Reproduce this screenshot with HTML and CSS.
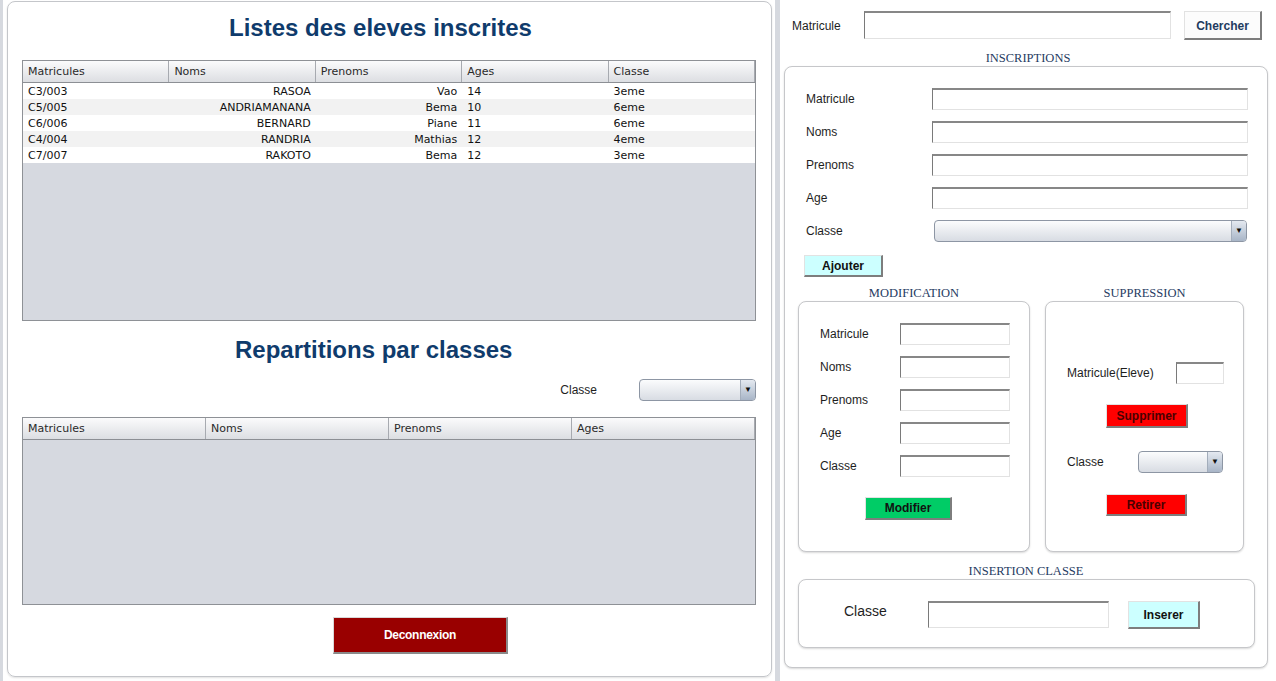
FILE: index.html
```html
<!DOCTYPE html>
<html lang="fr">
<head>
<meta charset="utf-8">
<title>Gestion des eleves</title>
<link rel="stylesheet" href="styles.css">
</head>
<body>
<div class="left-wrap">
  <div class="left-box">
    <h1 class="title title1">Listes des eleves inscrites</h1>
    <div class="table t1">
      <div class="thead cols5">
        <div class="th">Matricules</div><div class="th">Noms</div><div class="th">Prenoms</div><div class="th">Ages</div><div class="th">Classe</div>
      </div>
      <div class="tr cols5"><div class="td">C3/003</div><div class="td r">RASOA</div><div class="td r">Vao</div><div class="td">14</div><div class="td">3eme</div></div>
      <div class="tr cols5 alt"><div class="td">C5/005</div><div class="td r">ANDRIAMANANA</div><div class="td r">Bema</div><div class="td">10</div><div class="td">6eme</div></div>
      <div class="tr cols5"><div class="td">C6/006</div><div class="td r">BERNARD</div><div class="td r">Piane</div><div class="td">11</div><div class="td">6eme</div></div>
      <div class="tr cols5 alt"><div class="td">C4/004</div><div class="td r">RANDRIA</div><div class="td r">Mathias</div><div class="td">12</div><div class="td">4eme</div></div>
      <div class="tr cols5"><div class="td">C7/007</div><div class="td r">RAKOTO</div><div class="td r">Bema</div><div class="td">12</div><div class="td">3eme</div></div>
    </div>
    <h1 class="title title2">Repartitions par classes</h1>
    <div class="filter-row">
      <span class="lbl filter-lbl">Classe</span>
      <div class="combo combo-filter"><span class="combo-arrow">&#9660;</span></div>
    </div>
    <div class="table t2">
      <div class="thead cols4">
        <div class="th">Matricules</div><div class="th">Noms</div><div class="th">Prenoms</div><div class="th">Ages</div>
      </div>
    </div>
    <button class="btn btn-logout">Deconnexion</button>
  </div>
</div>
<div class="gap"></div>
<div class="right">
  <div class="search-row">
    <span class="lbl search-lbl">Matricule</span>
    <div class="input search-input"></div>
    <button class="btn btn-light btn-search">Chercher</button>
  </div>
  <div class="sec-title">INSCRIPTIONS</div>
  <div class="panel main-panel">
    <div class="form-row"><span class="lbl w126">Matricule</span><div class="input in-wide"></div></div>
    <div class="form-row"><span class="lbl w126">Noms</span><div class="input in-wide"></div></div>
    <div class="form-row"><span class="lbl w126">Prenoms</span><div class="input in-wide"></div></div>
    <div class="form-row"><span class="lbl w126">Age</span><div class="input in-wide"></div></div>
    <div class="form-row"><span class="lbl w126">Classe</span><div class="combo combo-wide"><span class="combo-arrow">&#9660;</span></div></div>
    <button class="btn btn-cyan btn-add">Ajouter</button>
    <div class="sub-cols">
      <div class="col col-mod">
        <div class="sub-title">MODIFICATION</div>
        <div class="panel mod-panel">
          <div class="form-row"><span class="lbl w80">Matricule</span><div class="input in-small"></div></div>
          <div class="form-row"><span class="lbl w80">Noms</span><div class="input in-small"></div></div>
          <div class="form-row"><span class="lbl w80">Prenoms</span><div class="input in-small"></div></div>
          <div class="form-row"><span class="lbl w80">Age</span><div class="input in-small"></div></div>
          <div class="form-row"><span class="lbl w80">Classe</span><div class="input in-small"></div></div>
          <button class="btn btn-green btn-mod">Modifier</button>
        </div>
      </div>
      <div class="col col-sup">
        <div class="sub-title">SUPPRESSION</div>
        <div class="panel sup-panel">
          <div class="form-row"><span class="lbl w109">Matricule(Eleve)</span><div class="input in-tiny"></div></div>
          <button class="btn btn-red btn-sup">Supprimer</button>
          <div class="form-row sup-classe"><span class="lbl w71">Classe</span><div class="combo combo-small"><span class="combo-arrow">&#9660;</span></div></div>
          <button class="btn btn-red btn-ret">Retirer</button>
        </div>
      </div>
    </div>
    <div class="sub-title ins-title">INSERTION CLASSE</div>
    <div class="panel ins-panel">
      <span class="lbl ins-lbl">Classe</span>
      <div class="input in-ins"></div>
      <button class="btn btn-cyan btn-ins">Inserer</button>
    </div>
  </div>
</div>
</body>
</html>
```
FILE: styles.css
```css
* { box-sizing: border-box; }
html, body { margin: 0; padding: 0; }
body {
  width: 1276px;
  height: 681px;
  overflow: hidden;
  background: #d6d9df;
  display: flex;
  font-family: "Liberation Sans", Arial, sans-serif;
}
.left-wrap {
  margin-left: 3px;
  width: 772px;
  height: 681px;
  background: #fff;
  padding: 1px 3px 4px 4px;
}
.left-box {
  width: 765px;
  height: 676px;
  border: 1px solid #c4c6ca;
  border-radius: 8px;
  box-shadow: 0 1px 2px rgba(0,0,0,0.12);
  padding: 0 14px;
  display: flex;
  flex-direction: column;
}
.title {
  margin: 0 0 6px 0;
  font-size: 24px;
  font-weight: bold;
  color: #0f3b6c;
  text-align: left;
  line-height: 53px;
  white-space: nowrap;
}
.title1 { padding-left: 207px; line-height: 52px; }
.title2 { margin: 0; line-height: 58px; padding-left: 213px; }
.table {
  width: 734px;
  border: 1px solid #8e9196;
  background: #d6d9e0;
  font-family: "DejaVu Sans", sans-serif;
  font-size: 11px;
}
.t1 { height: 261px; }
.t2 { height: 188px; margin-top: 16px; }
.thead {
  height: 22px;
  background: linear-gradient(#fbfbfc, #dcdee2);
  border-bottom: 1px solid #8c8f94;
}
.cols5 { display: grid; grid-template-columns: repeat(5, 1fr); }
.cols4 { display: grid; grid-template-columns: repeat(4, 1fr); }
.th {
  color: #2a2a2a;
  line-height: 21px;
  padding-left: 5px;
  border-right: 1px solid #a7aab0;
}
.tr { height: 16px; background: #fff; }
.tr.alt { background: #f2f2f2; }
.td {
  height: 16px;
  line-height: 16px;
  padding: 1px 5px 0 5px;
  color: #111;
  white-space: nowrap;
}
.td.r { text-align: right; }
.filter-row {
  width: 734px;
  height: 22px;
  display: flex;
  justify-content: flex-end;
  align-items: center;
}
.filter-lbl { margin-right: 42px; }
.lbl {
  font-size: 12px;
  color: #1e1e1e;
  white-space: nowrap;
}
.combo {
  height: 22px;
  border: 1px solid #8d96a4;
  border-radius: 4px;
  background: linear-gradient(#fbfcfd, #d8dce3);
  display: flex;
  justify-content: flex-end;
  overflow: hidden;
}
.combo-arrow {
  width: 15px;
  height: 100%;
  border-left: 1px solid #a3adbb;
  background: linear-gradient(#e4e9f0, #a8b5c7);
  font-size: 8px;
  line-height: 20px;
  text-align: center;
  color: #111;
}
.combo-filter { width: 117px; }
.btn {
  font-family: "Liberation Sans", Arial, sans-serif;
  font-weight: bold;
  font-size: 12px;
  padding: 0;
  border-style: solid;
  border-width: 1px 2px 2px 1px;
  border-color: #e2e2e2 #7d7d7d #7d7d7d #e2e2e2;
  cursor: pointer;
}
.btn-logout {
  margin-top: 12px;
  margin-left: 311px;
  width: 175px;
  height: 37px;
  background: #990000;
  color: #fff;
  letter-spacing: -0.3px;
  border-color: #d8d8d8 #8a8a8a #8a8a8a #d8d8d8;
}
.gap { width: 5px; }
.right {
  width: 496px;
  height: 681px;
  background: #fff;
  padding-top: 11px;
}
.search-row {
  display: flex;
  align-items: flex-start;
  padding-left: 12px;
  height: 29px;
}
.search-lbl { width: 72px; line-height: 30px; }
.input {
  background: #fff;
  border-style: solid;
  border-width: 2px 1px 1px 1px;
  border-color: #878787 #e2e2e2 #e2e2e2 #7a7a7a;
}
.search-input { width: 307px; height: 28px; }
.btn-light {
  background: #fcfcfc;
  color: #1f3b60;
}
.btn-search { margin-left: 13px; width: 78px; height: 29px; padding-top: 2px; }
.sec-title, .sub-title {
  font-family: "Liberation Serif", "Times New Roman", serif;
  font-size: 12.5px;
  color: #1f3b62;
  text-align: center;
  line-height: 14px;
}
.sec-title { height: 26px; padding-top: 11px; }
.panel {
  border: 1px solid #c6c7ca;
  border-radius: 8px;
  box-shadow: 0 1px 2px rgba(0,0,0,0.15);
  background: #fff;
}
.main-panel {
  margin-left: 4px;
  width: 484px;
  height: 602px;
  padding-top: 21px;
}
.form-row {
  display: flex;
  align-items: center;
  height: 22px;
  margin-bottom: 11px;
}
.main-panel > .form-row { padding-left: 21px; }
.w126 { width: 126px; }
.w80 { width: 80px; }
.w109 { width: 109px; }
.w71 { width: 71px; }
.in-wide { width: 316px; height: 22px; }
.combo-wide { width: 313px; margin-left: 2px; height: 22px; }
.btn-cyan { background: #ccffff; color: #111; }
.btn-add { margin-left: 19px; margin-top: 13px; width: 79px; height: 22px; display: block; }
.sub-cols {
  display: flex;
  gap: 15px;
  margin-left: 13px;
}
.sub-title { height: 24px; padding-top: 9px; }
.col-mod { width: 232px; }
.col-sup { width: 199px; }
.mod-panel { height: 251px; padding: 21px 0 0 21px; }
.in-small { width: 110px; height: 22px; }
.btn-green { background: #00cc66; color: #111; }
.btn-mod { display: block; margin-top: 20px; margin-left: 45px; width: 87px; height: 23px; }
.sup-panel { height: 251px; padding: 60px 0 0 21px; }
.in-tiny { width: 48px; height: 22px; }
.btn-red { background: #ff0000; color: #4a0000; }
.btn-sup { display: block; margin-top: 20px; margin-left: 39px; width: 82px; height: 24px; }
.sup-classe { margin-top: 23px; margin-bottom: 0; }
.combo-small { width: 85px; }
.btn-ret { display: block; margin-top: 21px; margin-left: 39px; width: 81px; height: 22px; }
.ins-title { height: 27px; padding-top: 12px; }
.ins-panel {
  margin-left: 13px;
  width: 457px;
  height: 69px;
  padding: 21px 0 0 45px;
  display: flex;
  align-items: flex-start;
}
.ins-lbl { width: 84px; font-size: 14px; line-height: 20px; }
.in-ins { width: 181px; height: 27px; }
.btn-ins { margin-left: 19px; width: 72px; height: 28px; }
```
